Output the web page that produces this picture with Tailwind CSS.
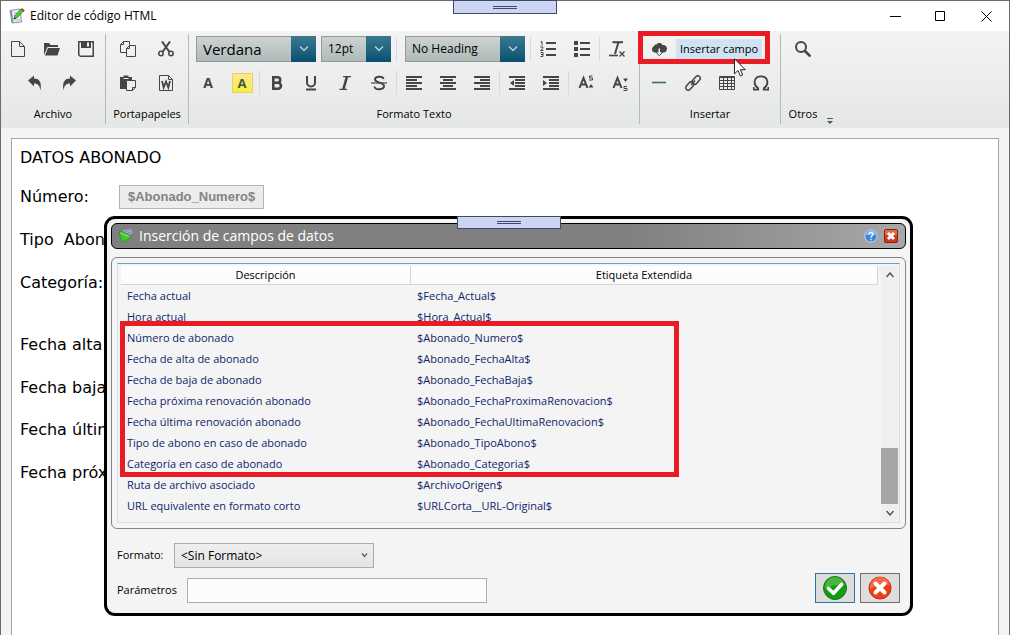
<!DOCTYPE html>
<html lang="es">

<head>
  <meta charset="UTF-8" />
  <meta name="viewport" content="width=device-width, initial-scale=1.0" />
  <title>Editor de código HTML</title>
  <script src="https://cdn.jsdelivr.net/npm/@tailwindcss/browser@4"></script>
</head>

<body class="bg-white text-black font-['Open_Sans',sans-serif] text-[11px] overflow-hidden">

  <div class="relative flex flex-col h-screen mr-1 border-t border-x border-[#6b6b6b] bg-[#f4f4f4]">

    <!-- Barra de título -->
    <header class="flex items-center h-[30px] shrink-0 bg-white pl-2">
      <svg class="w-4 h-4" viewBox="0 0 16 16">
        <path d="M1 2.500l10-1.500 1.500 13-9.500 1z" fill="#eef1f8" stroke="#8a8fb0" />
        <path d="M1 2.500l2-.3 1.500 12.500-1.500.3z" fill="#8d93b8" />
        <path d="M5 5h4M5 7.500h3M6 12h5" stroke="#a8adc8" />
        <path d="M5 11l1-3.500 6-6.500 2.500 2-6 6.500z" fill="#4bcf3a" stroke="#1d7a1a" stroke-width=".7" />
        <path d="M11.500 1.500L13 0l2.800 2.200L14.500 4z" fill="#e0392b" />
        <path d="M4.500 11.500l.8-2.500 1.700 1.500z" fill="#333" />
      </svg>
      <h1 class="ml-[5px] flex-1 text-[12px]">Editor de código HTML</h1>
      <button class="w-[45px] h-full flex items-center justify-center" aria-label="Minimizar">
        <svg class="w-[11px] h-[11px]" viewBox="0 0 11 11"><path d="M0 5.500h11" stroke="#000" /></svg>
      </button>
      <button class="w-[45px] h-full flex items-center justify-center" aria-label="Maximizar">
        <svg class="w-[11px] h-[11px]" viewBox="0 0 11 11"><path d="M.5.5h9v9h-9z" fill="none" stroke="#000" /></svg>
      </button>
      <button class="w-[46px] h-full flex items-center justify-center" aria-label="Cerrar">
        <svg class="w-[11px] h-[11px]" viewBox="0 0 11 11"><path d="M.5.5l10 10M10.500.5l-10 10" stroke="#000" /></svg>
      </button>
    </header>

    <!-- Cinta de opciones -->
    <nav class="flex shrink-0 pt-[3px] pb-1 bg-linear-to-b from-[#f3f3f3] to-[#e5e7e6] text-[#454545]">

      <!-- Archivo -->
      <section class="flex flex-col gap-1 w-[105px] border-r border-[#b4b8c0]">
        <div class="flex h-[30px]">
          <button class="w-[34px] flex items-center justify-center" aria-label="Nuevo">
            <svg class="w-4 h-4" viewBox="0 0 16 16" fill="none" stroke="currentColor"><path d="M1.500.5h8l5 5v10h-13zM9.500.5v5h5" /></svg>
          </button>
          <button class="w-[34px] flex items-center justify-center" aria-label="Abrir">
            <svg class="w-4 h-4" viewBox="0 0 16 16" fill="currentColor"><path d="M0 14V2h5l1.500 2H14v2H3.500z" /><path d="M1 14.500l3-7.500h12l-2.500 7.500z" /></svg>
          </button>
          <button class="w-[34px] flex items-center justify-center" aria-label="Guardar">
            <svg class="w-4 h-4" viewBox="0 0 16 16" fill="currentColor"><path fill-rule="evenodd" d="M0 0h16v16H2l-2-2zM1.500 1.500v12l1 1h12v-13H13V7H3V1.500zM9 1.500v4h2v-4z" /></svg>
          </button>
        </div>
        <div class="flex h-[30px] pl-[17px]">
          <button class="w-[34px] flex items-center justify-center" aria-label="Deshacer">
            <svg class="w-4 h-4" viewBox="0 0 16 16" fill="currentColor"><path d="M1 5.500L7 .5v3c5 0 8 3 6.500 12C13 11 11 8.500 7 8.500v3z" /></svg>
          </button>
          <button class="w-[34px] flex items-center justify-center" aria-label="Rehacer">
            <svg class="w-4 h-4" viewBox="0 0 16 16" fill="currentColor"><path d="M15 5.500L9 .5v3c-5 0-8 3-6.500 12C3 11 5 8.500 9 8.500v3z" /></svg>
          </button>
        </div>
        <h2 class="h-[22px] leading-6 text-center text-black">Archivo</h2>
      </section>

      <!-- Portapapeles -->
      <section class="flex flex-col gap-1 w-[83px] border-r border-[#b4b8c0]">
        <div class="flex h-[30px] pl-[3px]">
          <button class="w-[38px] flex items-center justify-center" aria-label="Copiar">
            <svg class="w-4 h-4" viewBox="0 0 16 16" fill="none" stroke="currentColor"><path d="M6 11.500H.5v-8l3-3h6V4M3.500.5v3h-3" /><path d="M6.500 7.500l3-3h6v11h-9zM9.500 4.500v3h-3" /></svg>
          </button>
          <button class="w-[38px] flex items-center justify-center" aria-label="Cortar">
            <svg class="w-4 h-4" viewBox="0 0 16 16" fill="none" stroke="currentColor" stroke-width="1.500"><circle cx="3" cy="12.500" r="2.200" /><circle cx="13" cy="12.500" r="2.200" /><path d="M4.500 11L12 .5M11.500 11L4 .5" stroke-width="2" /></svg>
          </button>
        </div>
        <div class="flex h-[30px] pl-[3px]">
          <button class="w-[38px] flex items-center justify-center" aria-label="Pegar">
            <svg class="w-4 h-4" viewBox="0 0 16 16" fill="currentColor"><path d="M0 2h3.500V.500h5V2H12v3H6v9H0z" /><path d="M3.500 3.500h5" stroke="#eee" /><path d="M6.500 5.500h9v7l-3 3h-6zM15.500 12.500h-3v3" fill="#efefef" stroke="currentColor" /></svg>
          </button>
          <button class="w-[38px] flex items-center justify-center" aria-label="Pegar desde Word">
            <svg class="w-4 h-4" viewBox="0 0 16 16" fill="none" stroke="currentColor"><path d="M1.500.5h9l4 4v11h-13zM10.500.5v4h4" /><path d="M4 6l1.700 6.500L8 6.500l2.300 6L12 6" stroke-width="1.800" /></svg>
          </button>
        </div>
        <h2 class="h-[22px] leading-6 text-center text-black">Portapapeles</h2>
      </section>

      <!-- Formato Texto -->
      <section class="flex flex-col gap-1 w-[451px] border-r border-[#b4b8c0]">
        <div class="flex items-center h-[30px] pl-[7px]">
          <div class="grid w-[120px] h-[26px]">
            <select class="col-start-1 row-start-1 appearance-none border border-[#949b9b] bg-linear-to-b from-[#cdd4d3] to-[#aebab9] pl-[6px] text-[15px] leading-[22px] text-black" aria-label="Fuente">
              <option>Verdana</option>
            </select>
            <span class="col-start-1 row-start-1 justify-self-end w-[25px] flex items-center justify-center bg-linear-to-b from-[#3a7891] to-[#06506f] pointer-events-none">
              <svg class="w-[10px] h-[6px]" viewBox="0 0 10 6"><path d="M1 .5l4 4 4-4" fill="none" stroke="#a9d3e2" stroke-width="1.500" /></svg>
            </span>
          </div>
          <div class="grid w-[70px] h-[26px] ml-[5px]">
            <select class="col-start-1 row-start-1 appearance-none border border-[#949b9b] bg-linear-to-b from-[#cdd4d3] to-[#aebab9] pl-[6px] text-[12px] text-black" aria-label="Tamaño">
              <option>12pt</option>
            </select>
            <span class="col-start-1 row-start-1 justify-self-end w-[25px] flex items-center justify-center bg-linear-to-b from-[#3a7891] to-[#06506f] pointer-events-none">
              <svg class="w-[10px] h-[6px]" viewBox="0 0 10 6"><path d="M1 .5l4 4 4-4" fill="none" stroke="#a9d3e2" stroke-width="1.500" /></svg>
            </span>
          </div>
          <span class="w-px h-6 ml-[5px] bg-[#d9d9d9]"></span>
          <div class="grid w-[120px] h-[26px] ml-2">
            <select class="col-start-1 row-start-1 appearance-none border border-[#949b9b] bg-linear-to-b from-[#cdd4d3] to-[#aebab9] pl-[6px] text-[12px] text-black" aria-label="Encabezado">
              <option>No Heading</option>
            </select>
            <span class="col-start-1 row-start-1 justify-self-end w-[25px] flex items-center justify-center bg-linear-to-b from-[#3a7891] to-[#06506f] pointer-events-none">
              <svg class="w-[10px] h-[6px]" viewBox="0 0 10 6"><path d="M1 .5l4 4 4-4" fill="none" stroke="#a9d3e2" stroke-width="1.500" /></svg>
            </span>
          </div>
          <span class="w-px h-6 ml-[5px] bg-[#d9d9d9]"></span>
          <button class="w-[34px] flex items-center justify-center" aria-label="Lista numerada">
            <svg class="w-4 h-4" viewBox="0 0 16 16" fill="none" stroke="currentColor"><path d="M6 2h10M6 8h10M6 14h10" stroke-width="2" /><path d="M.5 1l1.500-.5v4M.3 6h2.500v1.500L.5 9.500h3M.5 11.500H3v4H.5M1 13.500h2" /></svg>
          </button>
          <button class="w-[34px] flex items-center justify-center" aria-label="Lista con viñetas">
            <svg class="w-4 h-4" viewBox="0 0 16 16" fill="currentColor"><path d="M0 0h4v4H0zM0 6h4v4H0zM0 12h4v4H0zM6 1h10v2H6zM6 7h10v2H6zM6 13h10v2H6z" /></svg>
          </button>
          <span class="w-px h-6 bg-[#d9d9d9]"></span>
          <button class="w-[34px] flex items-center justify-center" aria-label="Borrar formato">
            <svg class="w-4 h-4" viewBox="0 0 16 16" fill="none" stroke="currentColor"><path d="M3.500 1.200H14" stroke-width="2" /><path d="M9.500 1L6 13" stroke-width="2" /><path d="M0 14.500h9" stroke-width="1.600" /><path d="M10.500 10.500l5 5M15.500 10.500l-5 5" stroke-width="1.400" /></svg>
          </button>
        </div>
        <div class="flex items-center h-[30px] pl-[2px]">
          <button class="w-[34px] flex items-center justify-center text-[14px] leading-5 font-bold" aria-label="Color de texto">A</button>
          <button class="w-[34px] flex items-center justify-center" aria-label="Color de resaltado">
            <span class="w-[21px] h-5 border border-[#e8cf6a] bg-linear-to-b from-[#fbe98c] to-[#f8ee35] text-[13px] leading-[18px] font-bold text-[#3c5a3c]">A</span>
          </button>
          <span class="w-px h-6 bg-[#d9d9d9]"></span>
          <button class="w-[34px] flex items-center justify-center" aria-label="Negrita">
            <svg class="w-4 h-4" viewBox="0 0 16 16" fill="none" stroke="currentColor" stroke-width="2.600"><path d="M4.300 2.300H8.500a2.700 2.700 0 0 1 0 5.400H4.300zM4.300 7.700H9a3 3 0 0 1 0 6H4.300z" /></svg>
          </button>
          <button class="w-[34px] flex items-center justify-center" aria-label="Subrayado">
            <svg class="w-4 h-4" viewBox="0 0 16 16" fill="none" stroke="currentColor" stroke-width="2"><path d="M4 1v6.500a4 4 0 0 0 8 0V1M3 14.500h10" /></svg>
          </button>
          <button class="w-[34px] flex items-center justify-center" aria-label="Cursiva">
            <svg class="w-4 h-4" viewBox="0 0 16 16" fill="none" stroke="currentColor"><path d="M6 1.600h8M2.500 14.400H10" stroke-width="1.400" /><path d="M10 1.500L6.300 14.500" stroke-width="2.600" /></svg>
          </button>
          <button class="w-[34px] flex items-center justify-center" aria-label="Tachado">
            <svg class="w-4 h-4" viewBox="0 0 16 16" fill="none" stroke="currentColor" stroke-width="2"><path d="M12.500 4C12 .8 4 .8 4 4.500c0 3.800 9 2.500 9 6.500 0 4-9 4.500-9.500.5" /><path d="M0 8h16" stroke-width="1.200" /></svg>
          </button>
          <span class="w-px h-6 bg-[#d9d9d9]"></span>
          <button class="w-[34px] flex items-center justify-center" aria-label="Alinear a la izquierda">
            <svg class="w-4 h-4" viewBox="0 0 16 16" fill="currentColor"><path d="M0 1h16v2H0zM0 4h11v2H0zM0 7h16v2H0zM0 10h11v2H0zM0 13h16v2H0z" /></svg>
          </button>
          <button class="w-[34px] flex items-center justify-center" aria-label="Centrar">
            <svg class="w-4 h-4" viewBox="0 0 16 16" fill="currentColor"><path d="M0 1h16v2H0zM3 4h10v2H3zM0 7h16v2H0zM3 10h10v2H3zM0 13h16v2H0z" /></svg>
          </button>
          <button class="w-[34px] flex items-center justify-center" aria-label="Alinear a la derecha">
            <svg class="w-4 h-4" viewBox="0 0 16 16" fill="currentColor"><path d="M0 1h16v2H0zM6 4h10v2H6zM0 7h16v2H0zM6 10h10v2H6zM0 13h16v2H0z" /></svg>
          </button>
          <span class="w-px h-6 bg-[#d9d9d9]"></span>
          <button class="w-[34px] flex items-center justify-center" aria-label="Reducir sangría">
            <svg class="w-4 h-4" viewBox="0 0 16 16" fill="currentColor"><path d="M0 1h16v2H0zM6 4h10v2H6zM6 7h10v2H6zM6 10h10v2H6zM0 13h16v2H0zM5 5v6L1 8z" /></svg>
          </button>
          <button class="w-[34px] flex items-center justify-center" aria-label="Aumentar sangría">
            <svg class="w-4 h-4" viewBox="0 0 16 16" fill="currentColor"><path d="M0 1h16v2H0zM6 4h10v2H6zM6 7h10v2H6zM6 10h10v2H6zM0 13h16v2H0zM0 5v6l4-3z" /></svg>
          </button>
          <span class="w-px h-6 bg-[#d9d9d9]"></span>
          <button class="w-[34px] flex items-center justify-center" aria-label="Superíndice">
            <svg class="w-4 h-4" viewBox="0 0 16 16" fill="none" stroke="currentColor"><path d="M1.500 13L5.500 3l4 10M3 9.500h5" stroke-width="2" /><path d="M14.500 1h-3v2h3v2H11" /><path d="M13 9l2.500 3.500h-5z" fill="currentColor" stroke="none" /></svg>
          </button>
          <button class="w-[34px] flex items-center justify-center" aria-label="Subíndice">
            <svg class="w-4 h-4" viewBox="0 0 16 16" fill="none" stroke="currentColor"><path d="M1.500 13L5.500 3l4 10M3 9.500h5" stroke-width="2" /><path d="M15 11.500h-3v2h3v2h-3.500" /><path d="M13.500 7L11 3.500h5z" fill="currentColor" stroke="none" /></svg>
          </button>
        </div>
        <h2 class="h-[22px] leading-6 text-center text-black">Formato Texto</h2>
      </section>

      <!-- Insertar -->
      <section class="flex flex-col gap-1 w-[141px] border-r border-[#b4b8c0]">
        <button class="flex items-center h-[30px] pl-[2px] text-black">
          <span class="w-[34px] flex justify-center text-[#454545]">
            <svg class="w-4 h-4" viewBox="0 0 16 16"><path d="M3.500 11.500a3.300 3.300 0 0 1-.5-6.300C3.500 3.500 5 3.500 5.500 3.600 7 1.500 10.500 1.600 11.500 4c2.500-.3 4.500 1.200 4.500 3.700 0 2.300-1.500 3.800-3.500 3.800z" fill="currentColor" /><path d="M7 7h2.500v4H12l-3.700 3.700L4.600 11H7z" fill="#f1f1f1" stroke="currentColor" stroke-width="1" /></svg>
          </span>
          <span class="px-1 leading-5 bg-[#cfe3f3]">Insertar campo</span>
        </button>
        <div class="flex h-[30px] pl-[2px]">
          <button class="w-[34px] flex items-center justify-center" aria-label="Línea horizontal">
            <svg class="w-4 h-4" viewBox="0 0 16 16"><path d="M1 7.500h14" stroke="#456770" stroke-width="1.600" /></svg>
          </button>
          <button class="w-[34px] flex items-center justify-center" aria-label="Vínculo">
            <svg class="w-4 h-4" viewBox="0 0 16 16" fill="none" stroke="currentColor" stroke-width="1.500"><rect x="6.500" y="2.600" width="9.500" height="5" rx="2.500" transform="rotate(-48 11.200 5.100)" /><rect x="0" y="8.400" width="9.500" height="5" rx="2.500" transform="rotate(-48 4.800 10.900)" /><path d="M6 10l4-4.500" /></svg>
          </button>
          <button class="w-[34px] flex items-center justify-center" aria-label="Tabla">
            <svg class="w-4 h-4" viewBox="0 0 16 16" fill="none" stroke="currentColor"><path d="M.5 1.500h15v13H.5zM.5 5.500h15M.5 8.500h15M.5 11.500h15M4.500 2v12M8.500 2v12M12.500 2v12" /><path d="M0 2.500h16" /></svg>
          </button>
          <button class="w-[34px] flex items-center justify-center" aria-label="Símbolo">
            <svg class="w-4 h-4" viewBox="0 0 16 16" fill="none" stroke="currentColor" stroke-width="1.800"><path d="M.6 12v2.700h4.600v-1.500C-.5 9.500.8 1.300 8 1.300s8.500 8.200 2.800 11.900v1.500h4.600V12" /></svg>
          </button>
        </div>
        <h2 class="h-[22px] leading-6 text-center text-black">Insertar</h2>
      </section>

      <!-- Otros -->
      <section class="flex flex-col gap-1 w-11">
        <div class="flex h-[30px] justify-center">
          <button class="w-[34px] flex items-center justify-center" aria-label="Buscar">
            <svg class="w-4 h-4" viewBox="0 0 16 16" fill="none" stroke="currentColor"><circle cx="6" cy="6" r="5" stroke-width="2" /><path d="M9.500 9.500l6 6" stroke-width="2.600" /></svg>
          </button>
        </div>
        <div class="h-[30px]"></div>
        <h2 class="h-[22px] leading-6 text-center text-black">Otros</h2>
      </section>
      <button class="self-end w-[10px] h-[5px] flex items-center justify-center" aria-label="Más opciones">
        <svg class="w-[6px] h-[7px] shrink-0" viewBox="0 0 6 7" fill="#555"><path d="M0 0h6v1H0zM0 3h6L3 6z" /></svg>
      </button>
    </nav>

    <!-- Documento -->
    <main class="flex-1 min-h-0 mt-[10px] mx-[10px] border-t border-x border-[#a5a5a5] bg-white pt-[7px] pl-2 font-['DejaVu_Sans',sans-serif] text-[16px] leading-6 overflow-hidden">
      <p>DATOS ABONADO</p>
      <div class="flex mt-[15px]">
        <label for="campoNumero" class="w-[99px]">Número:</label>
        <button id="campoNumero" class="h-6 px-2 border border-[#b3b3b3] bg-[#ececec] font-['Liberation_Sans',sans-serif] text-[13px] leading-[22px] font-bold text-[#838383]">$Abonado_Numero$</button>
      </div>
      <p class="mt-[19px]">Tipo&nbsp; Abon</p>
      <p class="mt-[19px]">Categoría:</p>
      <p class="mt-[38px]">Fecha alta</p>
      <p class="mt-[19px]">Fecha baja</p>
      <p class="mt-[18px]">Fecha últim</p>
      <p class="mt-[19px]">Fecha próx</p>
    </main>

    <!-- Tirador superior -->
    <div class="absolute -top-px left-[452px] w-[104px] h-[14px] border border-[#404870] bg-[#cbd4f0] flex items-center justify-center">
      <span class="w-6 h-[3px] border-y border-[#404870]"></span>
    </div>

    <!-- Recuadro del botón Insertar campo -->
    <div class="absolute top-[30px] left-[637px] w-[132px] h-[33px] border-5 border-[#e81c24] pointer-events-none"></div>
    <svg class="absolute top-[57px] left-[733px] w-3 h-[19px]" viewBox="0 0 12 19"><path d="M.5.8v15l3.500-3.300 2.300 5.400 2.400-1-2.300-5.200h4.900z" fill="#fff" stroke="#222" /></svg>

    <!-- Ventana de inserción de campos -->
    <section class="absolute top-[215px] left-[103px] right-[96px] border-3 border-black rounded-[11px] bg-[#f4f4f4] px-1 pt-1 pb-[10px]">
      <header class="flex items-center h-[26px] px-[7px] border border-black rounded-[6px] bg-linear-to-r from-[#808080] from-65% to-[#a8a8a8] text-white">
        <svg class="w-[14px] h-[14px]" viewBox="0 0 14 14"><path d="M4 1.500L12 0l2 3.500-6 4.500z" fill="#a9a9dc" /><path d="M6 2.500l6-1.200M8 4.500l5-1.500" stroke="#6f6fb0" stroke-width=".6" /><path d="M0 2.500l2.500-.5L4 3.500l5 1.500L12.500 8 9 10 6.500 13l-1.500-1.500L2.500 13.500z" fill="#43c52e" stroke="#1f8a1a" stroke-width=".6" /><path d="M1.500 4l8 3.500" stroke="#9cf07c" /></svg>
        <h2 class="ml-[6px] flex-1 text-[14px] leading-5">Inserción de campos de datos</h2>
        <button class="w-[14px] h-[14px]" aria-label="Ayuda">
          <svg class="w-[14px] h-[14px]" viewBox="0 0 14 14"><circle cx="7" cy="7" r="6.200" fill="#3f87da" stroke="#c5dcf5" /><path d="M2 6a5 5 0 0 1 10 0z" fill="#85b6ee" /><path d="M5 5.500c0-3 4.200-2.600 4 0-.2 1.300-2 1.400-2 3M7 9.800v1.400" fill="none" stroke="#fff" stroke-width="1.300" /></svg>
        </button>
        <button class="w-[14px] h-[14px] ml-[6px]" aria-label="Cerrar ventana">
          <svg class="w-[14px] h-[14px]" viewBox="0 0 14 14"><rect x=".5" y=".5" width="13" height="13" rx="1.500" fill="#cf3a1c" stroke="#8e1c0a" /><path d="M1 1h12v5H1z" fill="#e06a4a" /><path d="M4 4l6 6M10 4l-6 6" stroke="#fff" stroke-width="3" /></svg>
        </button>
      </header>

      <div class="mt-2 p-[5px] border border-[#858585] rounded-[6px]">
        <div class="flex border-x border-b border-t border-x-[#cfe0ea] border-b-[#cfe0ea] border-t-[#6a9fbc] pl-[3px] pr-px pt-[2px]">
          <div class="flex-1 pb-[6px] pr-[3px]">
            <table class="w-full table-fixed border-separate border-spacing-0 text-[#10246a]">
              <thead>
                <tr class="bg-linear-to-b from-white to-[#fafafa] text-black leading-[18px]">
                  <th class="w-[290px] p-0 font-normal border-b border-r border-[#d5d5d5]">Descripción</th>
                  <th class="p-0 font-normal border-b border-r border-[#d5d5d5]">Etiqueta Extendida</th>
                </tr>
              </thead>
              <tbody class="leading-[21px]">
                <tr><td class="py-0 px-[6px]">Fecha actual</td><td class="py-0 px-[6px]">$Fecha_Actual$</td></tr>
                <tr><td class="py-0 px-[6px]">Hora actual</td><td class="py-0 px-[6px]">$Hora_Actual$</td></tr>
                <tr><td class="py-0 px-[6px]">Número de abonado</td><td class="py-0 px-[6px]">$Abonado_Numero$</td></tr>
                <tr><td class="py-0 px-[6px]">Fecha de alta de abonado</td><td class="py-0 px-[6px]">$Abonado_FechaAlta$</td></tr>
                <tr><td class="py-0 px-[6px]">Fecha de baja de abonado</td><td class="py-0 px-[6px]">$Abonado_FechaBaja$</td></tr>
                <tr><td class="py-0 px-[6px]">Fecha próxima renovación abonado</td><td class="py-0 px-[6px]">$Abonado_FechaProximaRenovacion$</td></tr>
                <tr><td class="py-0 px-[6px]">Fecha última renovación abonado</td><td class="py-0 px-[6px]">$Abonado_FechaUltimaRenovacion$</td></tr>
                <tr><td class="py-0 px-[6px]">Tipo de abono en caso de abonado</td><td class="py-0 px-[6px]">$Abonado_TipoAbono$</td></tr>
                <tr><td class="py-0 px-[6px]">Categoría en caso de abonado</td><td class="py-0 px-[6px]">$Abonado_Categoria$</td></tr>
                <tr><td class="py-0 px-[6px]">Ruta de archivo asociado</td><td class="py-0 px-[6px]">$ArchivoOrigen$</td></tr>
                <tr><td class="py-0 px-[6px]">URL equivalente en formato corto</td><td class="py-0 px-[6px]">$URLCorta__URL-Original$</td></tr>
              </tbody>
            </table>
          </div>

          <!-- Barra de desplazamiento -->
          <div class="flex flex-col w-[17px] mb-px bg-[#efefef]">
            <button class="h-[17px] flex items-center justify-center" aria-label="Subir">
              <svg class="w-2 h-[6px]" viewBox="0 0 8 6"><path d="M.5 5L4 1l3.500 4" fill="none" stroke="#555" stroke-width="1.500" /></svg>
            </button>
            <div class="flex-1 flex flex-col justify-end"><span class="h-14 bg-[#a6a6a6]"></span></div>
            <button class="h-[17px] flex items-center justify-center" aria-label="Bajar">
              <svg class="w-2 h-[6px]" viewBox="0 0 8 6"><path d="M.5 1L4 5l3.500-4" fill="none" stroke="#555" stroke-width="1.500" /></svg>
            </button>
          </div>
        </div>
      </div>

      <form class="flex items-end justify-between mt-[14px] px-[6px]">
        <div class="flex flex-col gap-[10px]">
          <div class="flex items-center">
            <label for="formato" class="w-[57px]">Formato:</label>
            <div class="grid items-center w-[200px] h-[25px]">
              <select id="formato" class="col-start-1 row-start-1 h-full appearance-none border border-[#acacac] bg-linear-to-b from-[#efefef] to-[#e4e4e4] pl-[6px] text-[12px]">
                <option>&lt;Sin Formato&gt;</option>
              </select>
              <svg class="col-start-1 row-start-1 justify-self-end mr-[6px] w-[7px] h-[5px] pointer-events-none" viewBox="0 0 7 5"><path d="M1 .5l2.500 3L6 .5" fill="none" stroke="#606060" stroke-width="1.300" /></svg>
            </div>
          </div>
          <div class="flex items-center">
            <label for="parametros" class="w-[70px]">Parámetros</label>
            <input id="parametros" type="text" class="w-[300px] h-[25px] px-1 border border-[#abadb3] bg-[#fcfcfc]" />
          </div>
        </div>
        <div class="flex gap-[5px]">
          <button type="button" class="w-10 h-[30px] flex items-center justify-center border border-[#2a75ad] bg-[#dddddd]" aria-label="Aceptar">
            <svg class="w-6 h-6" viewBox="0 0 24 24"><circle cx="12" cy="12" r="11.500" fill="#159a14" stroke="#117a10" /><path d="M2 13A10.200 10.200 0 0 1 22 9C17 8 8 9 2 13z" fill="#4db340" /><path d="M5.500 12.500l5 4.800 8-8.800" fill="none" stroke="#fff" stroke-width="3.600" stroke-linecap="round" stroke-linejoin="round" /></svg>
          </button>
          <button type="button" class="w-10 h-[30px] flex items-center justify-center border border-[#707070] bg-[#dddddd]" aria-label="Cancelar">
            <svg class="w-6 h-6" viewBox="0 0 24 24"><circle cx="12" cy="12" r="11" fill="#ee3d14" stroke="#c42a0c" /><path d="M2 13A10.200 10.200 0 0 1 22 9C17 8 8 9 2 13z" fill="#f56a48" /><path d="M7.500 7.500l9 9M16.500 7.500l-9 9" stroke="#fff" stroke-width="4" stroke-linecap="round" /></svg>
          </button>
        </div>
      </form>
    </section>

    <!-- Tirador de la ventana -->
    <div class="absolute top-[215px] left-[456px] w-[104px] h-[13px] border border-[#404870] bg-[#cbd4f0] flex items-center justify-center">
      <span class="w-6 h-[3px] border-y border-[#404870]"></span>
    </div>

    <!-- Recuadro de los campos de abonado -->
    <div class="absolute top-[320px] left-[119px] w-[559px] h-[156px] border-5 border-[#e81c24] pointer-events-none"></div>
  </div>

</body>

</html>
